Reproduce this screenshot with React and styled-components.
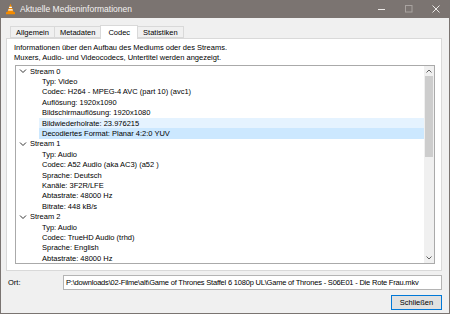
import React from "react";
import styled, { createGlobalStyle } from "styled-components";

const GlobalStyle = createGlobalStyle`
  html, body {
    margin: 0;
    padding: 0;
    background: #f0f0f0;
  }
  * {
    box-sizing: border-box;
  }
`;

const Window = styled.div`
  width: 450px;
  height: 314px;
  display: flex;
  flex-direction: column;
  background: #f0f0f0;
  border: 1px solid #7a7471;
  border-top: none;
  font-family: "Liberation Sans", Arial, sans-serif;
  font-size: 7.5px;
  color: #000;
  overflow: hidden;
`;

const TitleBar = styled.div`
  height: 18px;
  flex-shrink: 0;
  display: flex;
  align-items: center;
  background: #7b7471;
  color: #f4f2f1;
  padding-left: 4px;
`;

const TitleText = styled.span`
  margin-left: 4px;
  font-size: 8.5px;
  flex: 1;
`;

const Controls = styled.div`
  display: flex;
  height: 100%;
`;

const ControlButton = styled.div`
  width: 27px;
  height: 100%;
  display: flex;
  align-items: center;
  justify-content: center;
`;

const Body = styled.div`
  flex: 1;
  display: flex;
  flex-direction: column;
  padding: 6px 7px 4px 5px;
`;

const TabBar = styled.div`
  display: flex;
  align-items: flex-end;
  height: 14px;
  padding-left: 5px;
  position: relative;
  z-index: 1;
`;

const Tab = styled.div`
  height: ${(p) => (p.$active ? "14px" : "12px")};
  padding: 0 ${(p) => (p.$active ? "7px" : "5px")};
  margin-bottom: ${(p) => (p.$active ? "-1px" : "0")};
  display: flex;
  align-items: center;
  background: ${(p) => (p.$active ? "#fff" : "#f0f0f0")};
  border: 1px solid #d9d9d9;
  border-bottom: ${(p) => (p.$active ? "none" : "1px solid #d9d9d9")};
  margin-left: -1px;
`;

const Panel = styled.div`
  flex: 1;
  display: flex;
  flex-direction: column;
  background: #fff;
  border: 1px solid #d9d9d9;
  padding: 4px 6px 6px 7px;
`;

const Description = styled.div`
  line-height: 10px;
  margin-bottom: 2px;
`;

const TreeBox = styled.div`
  flex: 1;
  display: flex;
  border: 1px solid #aaaaaa;
  margin-left: 1px;
  overflow: hidden;
`;

const TreeList = styled.div`
  flex: 1;
  display: flex;
  flex-direction: column;
`;

const Row = styled.div`
  height: 10.4px;
  display: flex;
  align-items: center;
  padding-left: ${(p) => (p.$child ? "23px" : "3px")};
  white-space: nowrap;
`;

const RowLabel = styled.span`
  flex: 1;
  height: 100%;
  display: flex;
  align-items: center;
  padding-left: ${(p) => (p.$child ? "3px" : "0")};
  background: ${(p) =>
    p.$selected ? "#cce8ff" : p.$hover ? "#e5f3ff" : "transparent"};
`;

const Chevron = styled.svg`
  width: 8px;
  height: 6px;
  margin-right: 3px;
  flex-shrink: 0;
`;

const Scrollbar = styled.div`
  width: 10px;
  display: flex;
  flex-direction: column;
  background: #f0f0f0;
`;

const ScrollArrow = styled.div`
  height: 10px;
  display: flex;
  align-items: center;
  justify-content: center;
`;

const Thumb = styled.div`
  height: 81px;
  margin: 0 1px;
  background: #cdcdcd;
`;

const Track = styled.div`
  flex: 1;
`;

const Footer = styled.div`
  display: flex;
  flex-direction: column;
  padding-top: 4px;
`;

const PathRow = styled.div`
  display: flex;
  align-items: center;
  height: 15px;
`;

const PathLabel = styled.span`
  width: 57px;
  padding-left: 2px;
`;

const PathInput = styled.div`
  flex: 1;
  height: 15px;
  border: 1px solid #b4b4b4;
  background: #fff;
  display: flex;
  align-items: center;
  padding-left: 2px;
  letter-spacing: -0.2px;
  white-space: nowrap;
  overflow: hidden;
`;

const ButtonRow = styled.div`
  display: flex;
  justify-content: flex-end;
  margin-top: 5px;
`;

const Button = styled.div`
  width: 51px;
  height: 15px;
  border: 1px solid #0078d7;
  background: #e1e1e1;
  display: flex;
  align-items: center;
  justify-content: center;
  box-shadow: inset 0 0 0 1px #e1e1e1;
`;

const streams = [
  {
    name: "Stream 0",
    items: [
      "Typ: Video",
      "Codec: H264 - MPEG-4 AVC (part 10) (avc1)",
      "Auflösung: 1920x1090",
      "Bildschirmauflösung: 1920x1080",
      { text: "Bildwiederholrate: 23.976215", hover: true },
      { text: "Decodiertes Format: Planar 4:2:0 YUV", selected: true },
    ],
  },
  {
    name: "Stream 1",
    items: [
      "Typ: Audio",
      "Codec: A52 Audio (aka AC3) (a52 )",
      "Sprache: Deutsch",
      "Kanäle: 3F2R/LFE",
      "Abtastrate: 48000 Hz",
      "Bitrate: 448 kB/s",
    ],
  },
  {
    name: "Stream 2",
    items: [
      "Typ: Audio",
      "Codec: TrueHD Audio (trhd)",
      "Sprache: English",
      "Abtastrate: 48000 Hz",
    ],
  },
];

const tabs = ["Allgemein", "Metadaten", "Codec", "Statistiken"];

const VlcIcon = () => (
  <svg width="11" height="12" viewBox="0 0 11 12">
    <path d="M5.5 0.5 L8.6 9 L2.4 9 Z" fill="#f48b00" />
    <path d="M4.3 3.8 L6.7 3.8 L7.1 5 L3.9 5 Z" fill="#fff" />
    <path d="M3.5 6.3 L7.5 6.3 L7.9 7.5 L3.1 7.5 Z" fill="#fff" />
    <rect x="1" y="9" width="9" height="2.3" rx="0.6" fill="#f48b00" />
  </svg>
);

const App = () => {
  return (
    <>
      <GlobalStyle />
      <Window>
        <TitleBar>
          <VlcIcon />
          <TitleText>Aktuelle Medieninformationen</TitleText>
          <Controls>
            <ControlButton>
              <svg width="8" height="8" viewBox="0 0 8 8">
                <path d="M0 4.5 H7" stroke="#ece9e7" strokeWidth="1" />
              </svg>
            </ControlButton>
            <ControlButton>
              <svg width="8" height="8" viewBox="0 0 8 8">
                <rect x="0.5" y="0.5" width="6.5" height="6.5" fill="none" stroke="#a9a3a0" strokeWidth="1" />
              </svg>
            </ControlButton>
            <ControlButton>
              <svg width="8" height="8" viewBox="0 0 8 8">
                <path d="M0.5 0.5 L7.5 7.5 M7.5 0.5 L0.5 7.5" stroke="#ece9e7" strokeWidth="1" />
              </svg>
            </ControlButton>
          </Controls>
        </TitleBar>
        <Body>
          <TabBar>
            {tabs.map((t) => (
              <Tab key={t} $active={t === "Codec"}>
                {t}
              </Tab>
            ))}
          </TabBar>
          <Panel>
            <Description>
              Informationen über den Aufbau des Mediums oder des Streams.
              <br />
              Muxers, Audio- und Videocodecs, Untertitel werden angezeigt.
            </Description>
            <TreeBox>
              <TreeList>
                {streams.map((s) => (
                  <React.Fragment key={s.name}>
                    <Row>
                      <Chevron viewBox="0 0 8 6">
                        <path d="M1 1.5 L4 4.5 L7 1.5" fill="none" stroke="#333" strokeWidth="1" />
                      </Chevron>
                      <RowLabel>{s.name}</RowLabel>
                    </Row>
                    {s.items.map((it, i) => {
                      const item = typeof it === "string" ? { text: it } : it;
                      return (
                        <Row key={i} $child>
                          <RowLabel $child $hover={item.hover} $selected={item.selected}>
                            {item.text}
                          </RowLabel>
                        </Row>
                      );
                    })}
                  </React.Fragment>
                ))}
              </TreeList>
              <Scrollbar>
                <ScrollArrow>
                  <svg width="6" height="4" viewBox="0 0 6 4">
                    <path d="M0.5 3.5 L3 1 L5.5 3.5" fill="none" stroke="#606060" strokeWidth="1" />
                  </svg>
                </ScrollArrow>
                <Thumb />
                <Track />
                <ScrollArrow>
                  <svg width="6" height="4" viewBox="0 0 6 4">
                    <path d="M0.5 0.5 L3 3 L5.5 0.5" fill="none" stroke="#606060" strokeWidth="1" />
                  </svg>
                </ScrollArrow>
              </Scrollbar>
            </TreeBox>
          </Panel>
          <Footer>
            <PathRow>
              <PathLabel>Ort:</PathLabel>
              <PathInput>
                P:\downloads\02-Filme\alt\Game of Thrones Staffel 6 1080p UL\Game of Thrones - S06E01 - Die Rote Frau.mkv
              </PathInput>
            </PathRow>
            <ButtonRow>
              <Button>Schließen</Button>
            </ButtonRow>
          </Footer>
        </Body>
      </Window>
    </>
  );
};

export default App;
